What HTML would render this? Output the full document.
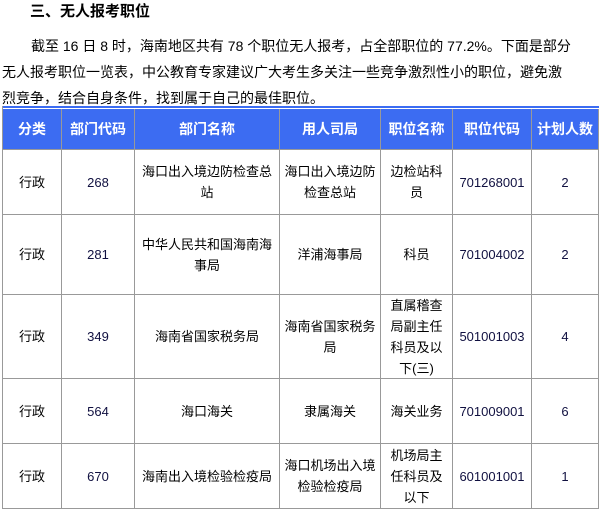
<!DOCTYPE html>
<html><head><meta charset="utf-8"><style>
body{margin:0;width:600px;height:511px;background:#fff;position:relative;overflow:hidden;font-family:"Liberation Sans","Noto Sans CJK SC",sans-serif;color:#000}
.h{position:absolute;left:30px;top:2px;font-size:15px;font-weight:bold;line-height:20px}
.p{position:absolute;left:2px;top:33px;width:600px;font-size:14px;line-height:26px;white-space:nowrap}
.c{position:absolute;display:flex;align-items:center;justify-content:center;text-align:center;font-size:13px;line-height:21px;box-sizing:border-box;border-right:1px solid #999;border-bottom:1px solid #999}
.hd{background:#3c6cf2;color:#fff;font-weight:bold;font-size:14px}
.n{color:#101040}
</style></head><body>
<div class="h">三、无人报考职位</div>
<div class="p"><span style="padding-left:29px"></span>截至 16 日 8 时，海南地区共有 78 个职位无人报考，占全部职位的 77.2%。下面是部分<br>无人报考职位一览表，中公教育专家建议广大考生多关注一些竞争激烈性小的职位，避免激<br>烈竞争，结合自身条件，找到属于自己的最佳职位。</div>
<div style="position:absolute;left:2px;top:106px;width:597px;height:2px;background:#3c6cf2"></div>
<div style="position:absolute;left:2px;top:106px;width:1px;height:403px;background:#999"></div>
<div id="t"></div>
<script>
var xs=[3,62,135,280,381,453,532,599],ys=[109,150,215,295,379,444,509];
var rows=[
["分类","部门代码","部门名称","用人司局","职位名称","职位代码","计划人数"],
["行政","268","海口出入境边防检查总<br>站","海口出入境边防<br>检查总站","边检站科<br>员","701268001","2"],
["行政","281","中华人民共和国海南海<br>事局","洋浦海事局","科员","701004002","2"],
["行政","349","海南省国家税务局","海南省国家税务<br>局","直属稽查<br>局副主任<br>科员及以<br>下(三)","501001003","4"],
["行政","564","海口海关","隶属海关","海关业务","701009001","6"],
["行政","670","海南出入境检验检疫局","海口机场出入境<br>检验检疫局","机场局主<br>任科员及<br>以下","601001001","1"]];
var h="";
for(var r=0;r<rows.length;r++)for(var c=0;c<7;c++){
var cls="c"+(r==0?" hd":"")+((c==1||c>=5)&&r>0?" n":"");
h+='<div class="'+cls+'" style="left:'+xs[c]+'px;top:'+ys[r]+'px;width:'+(xs[c+1]-xs[c])+'px;height:'+(ys[r+1]-ys[r])+'px">'+rows[r][c]+'</div>';}
document.getElementById("t").innerHTML=h;
</script>
</body></html>
